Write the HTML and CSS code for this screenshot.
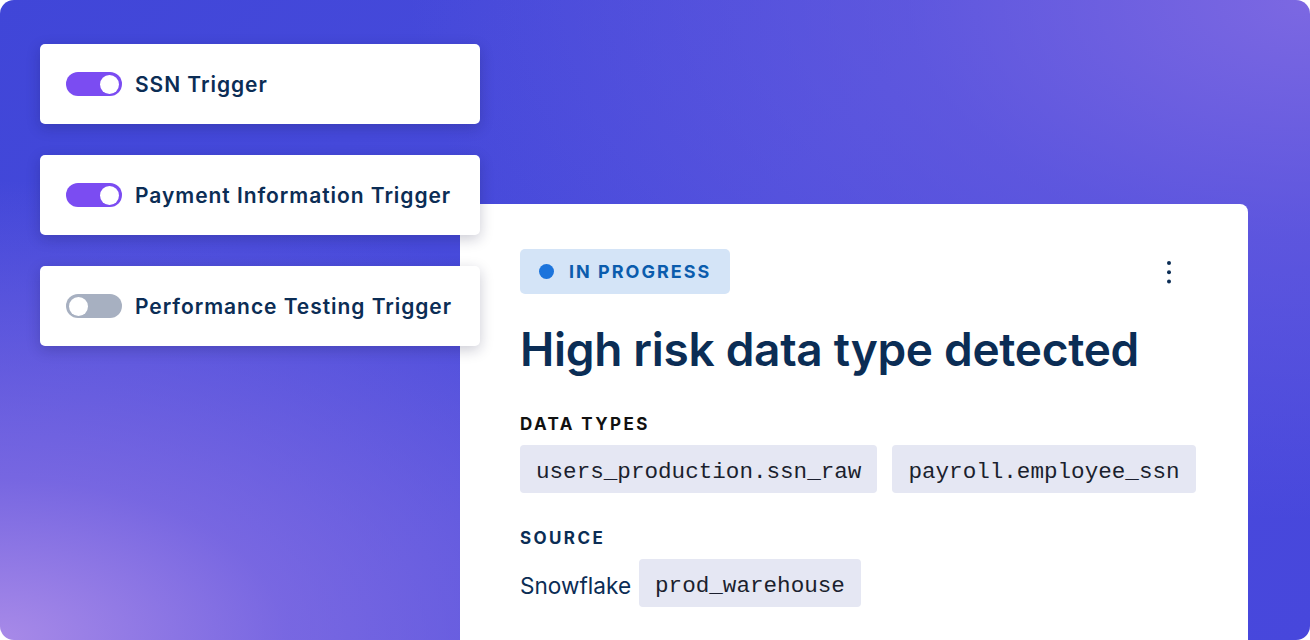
FILE: index.html
```html
<!DOCTYPE html>
<html>
<head>
<meta charset="utf-8">
<link rel="stylesheet" href="styles.css">
</head>
<body>
<div class="frame">
  <div class="triggers">
    <div class="trigger">
      <span class="toggle on"><span class="knob"></span></span>
      <span class="trigger-label">SSN Trigger</span>
    </div>
    <div class="trigger">
      <span class="toggle on"><span class="knob"></span></span>
      <span class="trigger-label">Payment Information Trigger</span>
    </div>
    <div class="trigger">
      <span class="toggle off"><span class="knob"></span></span>
      <span class="trigger-label">Performance Testing Trigger</span>
    </div>
  </div>
  <div class="alert">
    <div class="alert-head">
      <span class="badge"><span class="dot"></span>IN PROGRESS</span>
      <svg class="kebab" width="6" height="24" viewBox="0 0 6 24"><circle cx="3" cy="3" r="2" fill="#0b2d55"/><circle cx="3" cy="12.3" r="2" fill="#0b2d55"/><circle cx="3" cy="21.6" r="2" fill="#0b2d55"/></svg>
    </div>
    <h1 class="title">High risk data type detected</h1>
    <div class="section-label dark">DATA TYPES</div>
    <div class="chips">
      <span class="chip">users_production.ssn_raw</span>
      <span class="chip">payroll.employee_ssn</span>
    </div>
    <div class="section-label navy">SOURCE</div>
    <div class="chips">
      <span class="source">Snowflake</span>
      <span class="chip">prod_warehouse</span>
    </div>
  </div>
</div>
</body>
</html>
```
FILE: styles.css
```css
* { box-sizing: border-box; }
html, body { margin: 0; padding: 0; background: #fff; }
body { font-family: Inter, "Noto Sans", sans-serif; }
.frame {
  width: 1310px;
  height: 640px;
  border-radius: 14px;
  overflow: hidden;
  display: flex;
  align-items: flex-start;
  padding: 44px 0 0 40px;
  background:
    radial-gradient(ellipse 820px 460px at 0% 100%, rgba(168,138,232,1) 0%, rgba(140,115,228,0.7) 35%, rgba(110,95,224,0) 100%),
    radial-gradient(ellipse 900px 520px at 100% 0%, rgba(124,104,226,1) 0%, rgba(110,96,224,0.55) 45%, rgba(90,80,220,0) 100%),
    linear-gradient(135deg, #4046d8 0%, #4a4cdc 50%, #4747dc 100%);
}
.triggers {
  position: relative;
  z-index: 2;
  width: 440px;
  flex: none;
  display: flex;
  flex-direction: column;
  gap: 31px;
}
.trigger {
  height: 80px;
  background: #fff;
  border-radius: 5px;
  box-shadow: 0 4px 14px rgba(20, 20, 60, 0.22);
  display: flex;
  align-items: center;
  padding-left: 26px;
  gap: 13px;
}
.toggle {
  width: 56px;
  height: 24px;
  border-radius: 12px;
  display: flex;
  align-items: center;
  padding: 0 3px;
  flex: none;
}
.toggle.on { background: #7b4cf2; justify-content: flex-end; }
.toggle.off { background: #a7b0c1; justify-content: flex-start; }
.knob {
  width: 19px;
  height: 19px;
  border-radius: 50%;
  background: #fff;
}
.trigger-label {
  font-size: 21px;
  font-weight: 600;
  letter-spacing: 0.95px;
  color: #0b2d55;
}
.alert {
  position: relative;
  z-index: 1;
  flex: none;
  width: 788px;
  height: 480px;
  margin-left: -20px;
  margin-top: 160px;
  background: #fff;
  border-radius: 8px;
  padding: 45px 60px 0 60px;
}
.alert-head {
  display: flex;
  justify-content: space-between;
  align-items: center;
}
.badge {
  display: inline-flex;
  align-items: center;
  height: 45px;
  padding: 0 19px 0 19px;
  background: #d4e4f7;
  border-radius: 5px;
  font-size: 18px;
  font-weight: 700;
  letter-spacing: 2px;
  color: #0b5cad;
}
.dot {
  width: 15px;
  height: 15px;
  border-radius: 50%;
  background: #1c74dc;
  margin-right: 15px;
}
.kebab { margin-right: 16px; }
.title {
  margin: 27px 0 0 0;
  font-size: 46px;
  font-weight: 600;
  line-height: 56px;
  color: #0b2d55;
  letter-spacing: -0.3px;
}
.section-label {
  font-size: 17px;
  font-weight: 700;
  letter-spacing: 2.4px;
  line-height: 24px;
}
.section-label.dark { color: #111; margin-top: 35px; }
.section-label.navy { color: #0b2d55; margin-top: 33px; }
.chips {
  display: flex;
  align-items: center;
  gap: 15px;
  margin-top: 9px;
}
.chip {
  height: 48px;
  display: inline-flex;
  align-items: center;
  padding: 6px 16px 0 16px;
  background: #e5e7f3;
  border-radius: 4px;
  font-family: "Liberation Mono", "DejaVu Sans Mono", monospace;
  font-size: 22.6px;
  color: #1b1f2e;
}
.source {
  font-size: 22.6px;
  color: #0b2d55;
  margin-right: -7px;
  padding-top: 4px;
}
```
